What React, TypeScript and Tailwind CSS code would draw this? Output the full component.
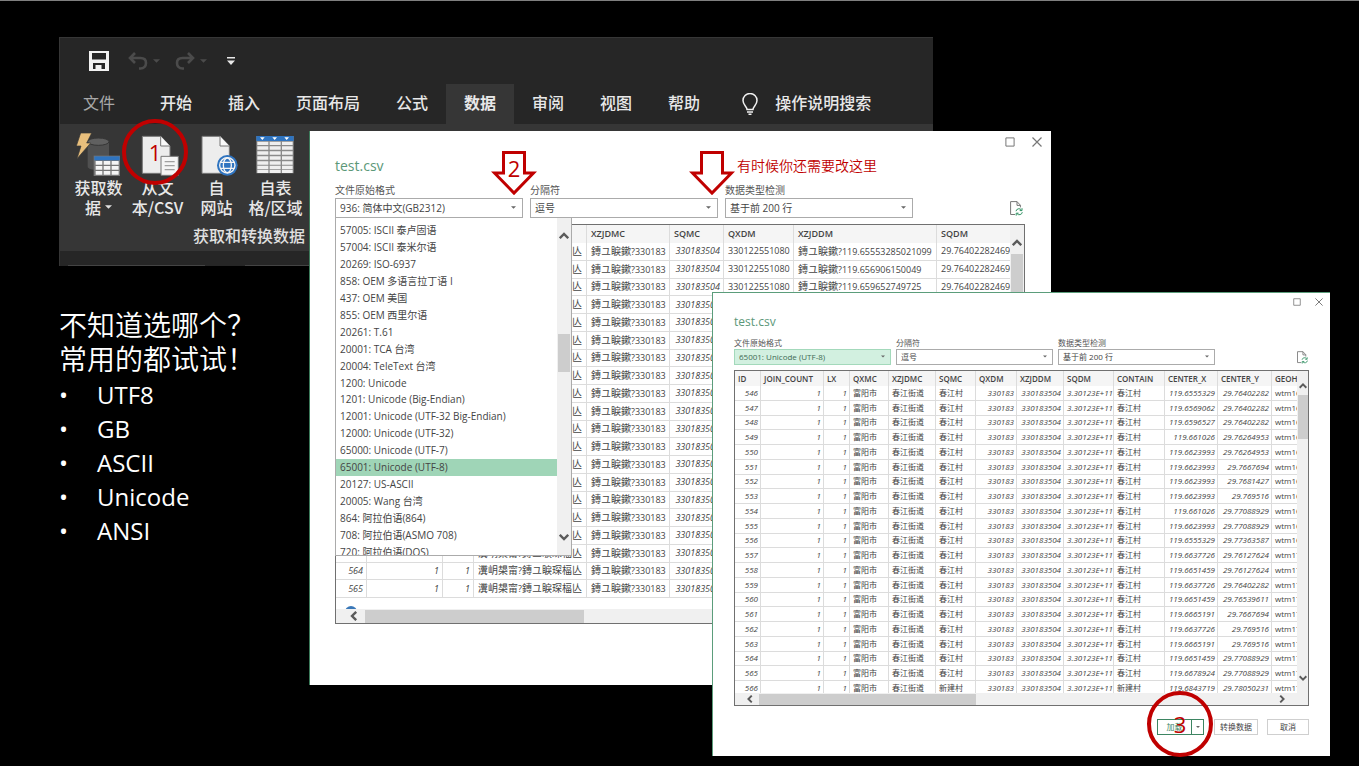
import React from "react";

const latin = "font-['Open_Sans','Noto_Sans_CJK_SC',sans-serif]";

type Column = { name: string; width: string; number?: boolean };
type Size = "large" | "small";

const garbledColumns: Column[] = [
  { name: "ID", width: "w-[31px]", number: true },
  { name: "JOIN_COUNT", width: "w-[76px]", number: true },
  { name: "LX", width: "w-[31px]", number: true },
  { name: "QXMC", width: "w-[113px]" },
  { name: "XZJDMC", width: "w-[83px]" },
  { name: "SQMC", width: "w-[54px]", number: true },
  { name: "QXDM", width: "w-[70px]" },
  { name: "XZJDDM", width: "w-[143px]" },
  { name: "SQDM", width: "w-[89px]" },
];

const garbledX = ["119.65553285021099", "119.656906150049", "119.659652749725"];

const garbledRows: string[][] = Array.from({ length: 20 }, (_, i) => [
  String(546 + i),
  "1",
  "1",
  "瀵岄槼甯?鏄ユ睙琛楅亾",
  "鏄ユ睙鏉?330183",
  "330183504",
  "330122551080",
  "鏄ユ睙鏉?" + (garbledX[i] ?? "119.661026"),
  "29.764022824693",
]);

const cleanColumns: Column[] = [
  { name: "ID", width: "w-[26px]", number: true },
  { name: "JOIN_COUNT", width: "w-[63px]", number: true },
  { name: "LX", width: "w-[26px]", number: true },
  { name: "QXMC", width: "w-[39px]" },
  { name: "XZJDMC", width: "w-[47px]" },
  { name: "SQMC", width: "w-[40px]" },
  { name: "QXDM", width: "w-[41px]", number: true },
  { name: "XZJDDM", width: "w-[47px]", number: true },
  { name: "SQDM", width: "w-[50px]", number: true },
  { name: "CONTAIN", width: "w-[51px]" },
  { name: "CENTER_X", width: "w-[53px]", number: true },
  { name: "CENTER_Y", width: "w-[54px]", number: true },
  { name: "GEOHASH", width: "w-[59px]" },
];

const coordinates: [string, string][] = [
  ["119.6555329", "29.76402282"],
  ["119.6569062", "29.76402282"],
  ["119.6596527", "29.76402282"],
  ["119.661026", "29.76264953"],
  ["119.6623993", "29.76264953"],
  ["119.6623993", "29.7667694"],
  ["119.6623993", "29.7681427"],
  ["119.6623993", "29.769516"],
  ["119.661026", "29.77088929"],
  ["119.6623993", "29.77088929"],
  ["119.6555329", "29.77363587"],
  ["119.6637726", "29.76127624"],
  ["119.6651459", "29.76127624"],
  ["119.6637726", "29.76402282"],
  ["119.6651459", "29.76539611"],
  ["119.6665191", "29.7667694"],
  ["119.6637726", "29.769516"],
  ["119.6665191", "29.769516"],
  ["119.6651459", "29.77088929"],
  ["119.6678924", "29.77088929"],
  ["119.6843719", "29.78050231"],
];

const cleanRows: string[][] = coordinates.map(([x, y], i) => {
  const village = i === 20 ? "新建村" : "春江村";
  return [
    String(546 + i), "1", "1", "富阳市", "春江街道", village, "330183", "330183504",
    "3.30123E+11", village, x, y, i < 11 ? "wtm16" : "wtm17",
  ];
});

const encodings = [
  "57011: ISCII 旁遮普语",
  "57005: ISCII 泰卢固语",
  "57004: ISCII 泰米尔语",
  "20269: ISO-6937",
  "858: OEM 多语言拉丁语 I",
  "437: OEM 美国",
  "855: OEM 西里尔语",
  "20261: T.61",
  "20001: TCA 台湾",
  "20004: TeleText 台湾",
  "1200: Unicode",
  "1201: Unicode (Big-Endian)",
  "12001: Unicode (UTF-32 Big-Endian)",
  "12000: Unicode (UTF-32)",
  "65000: Unicode (UTF-7)",
  "65001: Unicode (UTF-8)",
  "20127: US-ASCII",
  "20005: Wang 台湾",
  "864: 阿拉伯语(864)",
  "708: 阿拉伯语(ASMO 708)",
  "720: 阿拉伯语(DOS)",
];

function Chevron({ className }: { className: string }) {
  return (
    <svg viewBox="0 0 10 10" className={className} fill="none" stroke="#5a5a5a" strokeWidth="2.4" aria-hidden="true">
      <path d="M.8 7.200 5 3l4.200 4.200" />
    </svg>
  );
}

function Caret({ className, fill = "#666" }: { className: string; fill?: string }) {
  return (
    <svg viewBox="0 0 8 4" className={className} fill={fill} aria-hidden="true">
      <path d="M0 0h8L4 4z" />
    </svg>
  );
}

function WindowButtons({ size }: { size: Size }) {
  const icon = size === "large" ? "size-[10px]" : "size-2";
  return (
    <div className={size === "large" ? "flex justify-end gap-[17px] pt-[6px] pr-[9px]" : "flex justify-end gap-[14px] pt-[5px] pr-[7px]"}>
      <button type="button" aria-label="最大化" className="flex">
        <svg viewBox="0 0 10 10" className={icon} fill="none" stroke="#777"><path d="M.9.9h8.2v8.2H.9z" /></svg>
      </button>
      <button type="button" aria-label="关闭" className="flex">
        <svg viewBox="0 0 10 10" className={icon} fill="none" stroke="#777" strokeWidth="1.2"><path d="M.5.5l9 9M9.5.5l-9 9" /></svg>
      </button>
    </div>
  );
}

function Field({ id, label, value, size, highlighted, children }: {
  id: string; label: string; value: string; size: Size; highlighted?: boolean; children?: React.ReactNode;
}) {
  const large = size === "large";
  return (
    <div className={large ? "relative w-[188px]" : "relative w-[157px]"}>
      <label htmlFor={id} className={large ? "block text-[10px] leading-[15px] text-[#555]" : "block text-[8px] leading-3 text-[#555]"}>
        {label}
      </label>
      <div className="relative">
        <select
          id={id}
          defaultValue={value}
          className={
            (large ? "h-5 pl-1 text-[10px] " : "h-4 pl-1 text-[8px] ") +
            (highlighted ? "border-[#a3d9bb] bg-[#d2f0e0] text-[#3f6b55] " : "border-[#ababab] bg-white text-[#444] ") +
            "block w-full appearance-none rounded-none border"
          }
        >
          <option>{value}</option>
        </select>
        <Caret className={large ? "pointer-events-none absolute top-2 right-[7px] h-[3px] w-[5px]" : "pointer-events-none absolute top-[6px] right-[6px] h-[3px] w-1"} />
      </div>
      {children}
    </div>
  );
}

function RefreshIcon({ className }: { className: string }) {
  return (
    <svg viewBox="0 0 13 15" className={className} fill="none" aria-hidden="true">
      <path d="M5 13.500H.6V.6H7l3.400 3.600v2.200M7 .6v3.800h3.400" stroke="#777" />
      <path d="M6 10.200A3 3 0 0 1 11.400 9M12 7.200v2.400H9.700M12.300 11.200A3 3 0 0 1 7 12.600M6.200 14.600v-2.400h2.400" stroke="#2f9162" />
    </svg>
  );
}

/* Han and kana runs are set one pixel larger than the digits beside them. */
function MixedText({ text }: { text: string }) {
  return (
    <>
      {text.split(/([\u3000-\u9fff]+)/).filter(Boolean).map((part, i) =>
        /[\u3000-\u9fff]/.test(part) ? <span key={i} className="text-[10px]">{part}</span> : part,
      )}
    </>
  );
}

function DataTable({ columns, rows, size }: { columns: Column[]; rows: string[][]; size: Size }) {
  const large = size === "large";
  return (
    <table
      className={
        (large ? "h-[373px] w-[690px] text-[9px] leading-[14px] " : "h-[325px] w-[596px] text-[8px] leading-3 ") +
        "table-fixed border-separate border-spacing-0 text-[#444]"
      }
    >
      <colgroup>
        {columns.map((c) => <col key={c.name} className={c.width} />)}
      </colgroup>
      <thead>
        <tr className={large ? "h-[18px]" : "h-[15px]"}>
          {columns.map((c) => (
            <th key={c.name} scope="col" className={(large ? "px-1 " : "pl-[3px] ") + "border-r border-[#dcdcdc] bg-[#f5f5f5] py-0 text-left font-semibold whitespace-nowrap"}>
              {c.name}
            </th>
          ))}
        </tr>
      </thead>
      <tbody>
        {rows.map((row) => (
          <tr key={row[0]}>
            {row.map((cell, i) => (
              <td
                key={i}
                className={
                  (large ? "pr-[3px] pl-1 " : "pr-[2px] pl-[3px] ") +
                  (columns[i].number ? "text-right italic " : "") +
                  "border-r border-b border-[#dcdcdc] py-0 whitespace-nowrap"
                }
              >
                {large ? <MixedText text={cell} /> : cell}
              </td>
            ))}
          </tr>
        ))}
      </tbody>
    </table>
  );
}

function SaveIcon() {
  return (
    <svg viewBox="0 0 20 20" className="size-5" fill="#f2f2f2" aria-hidden="true">
      <path fillRule="evenodd" d="M0 0h20v20H0zM3 2v6.500h14V2zM4 12v6h2.500v-4h6v4H16v-6z" />
      <path d="M8.500 14.500h2.500V18H8.500z" />
    </svg>
  );
}

function UndoIcon({ flipped }: { flipped?: boolean }) {
  return (
    <svg viewBox="0 0 20 18" className={flipped ? "h-[18px] w-5 -scale-x-100" : "h-[18px] w-5"} fill="none" stroke="#4b4b4b" strokeWidth="2.6" aria-hidden="true">
      <path d="M7 1 2 6l5 5M2 6h10.500c3.500 0 5.500 2 5.500 5s-2 5.500-5.500 5.500H11" />
    </svg>
  );
}

function GetDataIcon() {
  return (
    <svg viewBox="81 300 138 138" className="size-[46px]" aria-hidden="true">
      <path d="M116 333v74c0 6 14 10 33 10s31-4 31-10v-74z" fill="#505050" />
      <ellipse cx="148" cy="332" rx="32" ry="11" fill="#606060" stroke="#363636" strokeWidth="3" />
      <path d="M95 306h33l-15 30h12l-41 47 12-38H82z" fill="#e8bf7c" stroke="#363636" strokeWidth="2" />
      <path d="M134 374h79v61h-79z" fill="#777" />
      <path d="M136 376h76v12h-76z" fill="#2f74c0" />
      <path d="M140 390h20v11h-20zM164 390h20v11h-20zM188 390h21v11h-21zM140 405h20v11h-20zM164 405h20v11h-20zM188 405h21v11h-21zM140 420h20v11h-20zM164 420h20v11h-20zM188 420h21v11h-21z" fill="#f5f5f5" />
    </svg>
  );
}

function TextFileIcon() {
  return (
    <svg viewBox="255 300 138 138" className="size-[46px]" aria-hidden="true">
      <path d="M277 316h55l28 29v82h-83z" fill="#ededed" stroke="#777" strokeWidth="3" />
      <path d="M332 316v29h28" fill="#fafafa" stroke="#777" strokeWidth="3" />
      <path d="M333 376h52v57h-52z" fill="#f5f5f5" stroke="#777" strokeWidth="3" />
      <path d="M344 392h30M344 404h30M344 416h30" stroke="#a0a0a0" strokeWidth="4" />
    </svg>
  );
}

function WebIcon() {
  return (
    <svg viewBox="432 300 138 138" className="size-[46px]" aria-hidden="true">
      <path d="M456 316h54l28 29v82h-82z" fill="#ededed" stroke="#777" strokeWidth="3" />
      <path d="M510 316v29h28" fill="#fafafa" stroke="#777" strokeWidth="3" />
      <circle cx="532" cy="403" r="31" fill="#2f74c0" />
      <g fill="none" stroke="#f5f5f5" strokeWidth="4">
        <ellipse cx="532" cy="403" rx="12" ry="22" />
        <circle cx="532" cy="403" r="23" />
        <path d="M511 394h42M511 412h42" />
      </g>
    </svg>
  );
}

function RangeIcon() {
  return (
    <svg viewBox="609 300 138 138" className="size-[46px]" aria-hidden="true">
      <path d="M619 315h112v112H619z" fill="#8a8a8a" />
      <path d="M619 315h112v15H619z" fill="#2f74c0" />
      <path d="M630 319h14l-7 8zM667 319h14l-7 8zM703 319h14l-7 8z" fill="#fff" />
      {[332, 346, 361, 376, 391, 404, 416].map((y) => (
        <path key={y} d={`M622 ${y}h33v10h-33zM659 ${y}h33v10h-33zM696 ${y}h32v10h-32z`} fill="#efefef" />
      ))}
    </svg>
  );
}

function RibbonButton({ icon, lines, menu }: { icon: React.ReactNode; lines: [string, string]; menu?: boolean }) {
  return (
    <button type="button" className="flex w-[59px] shrink-0 flex-col items-center text-base leading-5 font-medium whitespace-nowrap text-[#e8e8e8]">
      {icon}
      <span>{lines[0]}</span>
      <span className="flex items-center gap-1">
        {lines[1]}
        {menu && <Caret className="h-1 w-[7px]" fill="#e0e0e0" />}
      </span>
    </button>
  );
}

const tabs = ["开始", "插入", "页面布局", "公式", "数据", "审阅", "视图", "帮助"];

function ExcelRibbon() {
  return (
    <section aria-label="Excel" className="absolute top-[37px] left-[59px] flex h-[229px] w-[874px] flex-col border-t border-l border-[#363636] bg-[#262626] font-['Noto_Sans_CJK_SC',sans-serif]">
      <div className="flex h-[46px] items-center pl-[29px]">
        <button type="button" aria-label="保存"><SaveIcon /></button>
        <button type="button" aria-label="撤消" className="ml-[19px] flex items-center gap-[5px]">
          <UndoIcon /><Caret className="h-1 w-[7px]" fill="#4b4b4b" />
        </button>
        <button type="button" aria-label="恢复" className="ml-[15px] flex items-center gap-[5px]">
          <UndoIcon flipped /><Caret className="h-1 w-[7px]" fill="#4b4b4b" />
        </button>
        <button type="button" aria-label="自定义快速访问工具栏" className="ml-5">
          <svg viewBox="0 0 8 8" className="size-2" fill="#e8e8e8"><path d="M0 0h8v1.500H0zM0 3.500h8L4 8z" /></svg>
        </button>
      </div>
      <nav className="flex h-10 items-stretch text-base font-medium text-[#e8e8e8]">
        <button type="button" className="w-[82px] pr-1 pb-1 font-normal text-[#a8a8a8]">文件</button>
        {tabs.map((tab) => (
          <button
            key={tab}
            type="button"
            className={tab === "数据" ? "bg-[#363636] px-[18px] pb-1 font-bold" : "px-[18px] pb-1"}
          >
            {tab}
          </button>
        ))}
        <button type="button" className="ml-6 flex items-center gap-[17px] pb-1">
          <svg viewBox="0 0 16 22" className="mt-1 h-[22px] w-4" fill="none" stroke="#f0f0f0" strokeWidth="1.500" aria-hidden="true">
            <path d="M5 16.500c0-3-4-4.500-4-9a7 7 0 0 1 14 0c0 4.500-4 6-4 9zM5 19h6M6.500 21.300h3" />
          </svg>
          操作说明搜索
        </button>
      </nav>
      <div className="flex h-[127px] flex-col bg-[#363636] pt-[7px]">
        <div className="flex pl-[9px]">
          <RibbonButton icon={<GetDataIcon />} lines={["获取数", "据"]} menu />
          <RibbonButton icon={<TextFileIcon />} lines={["从文", "本/CSV"]} />
          <RibbonButton icon={<WebIcon />} lines={["自", "网站"]} />
          <RibbonButton icon={<RangeIcon />} lines={["自表", "格/区域"]} />
        </div>
        <p className="pt-[6px] pl-[133px] text-base leading-6 font-medium text-[#e0e0e0]">获取和转换数据</p>
      </div>
      <div className="flex flex-1 items-end gap-10 pl-2">
        <span className="h-px w-[137px] bg-[#444]" />
        <span className="h-px w-[80px] bg-[#444]" />
      </div>
    </section>
  );
}

function GarbledWindow() {
  return (
    <section aria-label="test.csv 936" className={`absolute top-[131px] left-[309px] h-[554px] w-[742px] border-l border-[#3c7a5a] bg-white ${latin}`}>
      <WindowButtons size="large" />
      <div className="pr-[26px] pl-[25px]">
        <h2 className="pt-2 text-sm leading-[22px] text-[#5b9879]">test.csv</h2>
        <div className="flex items-end gap-[7px] pt-[6px]">
          <Field id="origin-a" label="文件原始格式" value="936: 简体中文(GB2312)" size="large">
            <div className="absolute top-full left-0 z-10 flex h-[338px] w-[237px] overflow-hidden border-x border-b border-[#ababab] bg-white">
              <ul role="listbox" aria-label="文件原始格式" className="-mt-[13px] flex h-[355px] flex-1 shrink-0 flex-col text-[10px] text-[#444]">
                {encodings.map((item) => {
                  const selected = item.startsWith("65001");
                  return (
                    <li key={item} role="option" aria-selected={selected} className={selected ? "flex flex-1 items-center bg-[#9fd5b7] pl-1 leading-4" : "flex flex-1 items-center pl-1 leading-4"}>
                      {item}
                    </li>
                  );
                })}
              </ul>
              <div className="flex w-[14px] flex-col items-center bg-[#f0f0f0] pt-[13px] pb-[13px]">
                <Chevron className="size-[10px]" />
                <span className="mt-[93px] h-[38px] w-3 bg-[#cdcdcd]" />
                <Chevron className="mt-auto size-[10px] rotate-180" />
              </div>
            </div>
          </Field>
          <Field id="separator-a" label="分隔符" value="逗号" size="large" />
          <Field id="detect-a" label="数据类型检测" value="基于前 200 行" size="large" />
          <button type="button" aria-label="刷新" className="mr-[2px] mb-[2px] ml-auto"><RefreshIcon className="h-[15px] w-[13px]" /></button>
        </div>
        <div className="mt-[6px] flex h-[400px] flex-col border border-[#707070]">
          <div className="flex min-h-0 flex-1">
            <div className="min-w-0 flex-1 overflow-hidden">
              <DataTable columns={garbledColumns} rows={garbledRows} size="large" />
              <svg viewBox="0 0 12 12" className="mt-2 ml-[9px] size-3" aria-hidden="true"><circle cx="6" cy="6" r="6" fill="#3a78b8" /></svg>
            </div>
            <div className="flex w-[14px] flex-col items-center bg-[#f0f0f0] pt-[13px]">
              <Chevron className="size-[10px]" />
              <span className="mt-[6px] h-20 w-3 bg-[#cdcdcd]" />
            </div>
          </div>
          <div className="flex h-[14px] items-center bg-[#f0f0f0] pl-[13px]">
            <Chevron className="size-[10px] -rotate-90" />
            <span className="ml-[6px] h-[13px] w-[219px] bg-[#cdcdcd]" />
          </div>
        </div>
      </div>
    </section>
  );
}

function CleanWindow() {
  return (
    <section aria-label="test.csv 65001" className={`absolute top-[292px] left-[712px] h-[464px] w-[618px] border-t border-l border-[#5b9d7b] bg-white ${latin}`}>
      <WindowButtons size="small" />
      <div className="px-[21px]">
        <h2 className="pt-[6px] text-xs leading-5 text-[#5b9879]">test.csv</h2>
        <div className="flex items-end gap-[5px] pt-[5px]">
          <Field id="origin-b" label="文件原始格式" value="65001: Unicode (UTF-8)" size="small" highlighted />
          <Field id="separator-b" label="分隔符" value="逗号" size="small" />
          <Field id="detect-b" label="数据类型检测" value="基于前 200 行" size="small" />
          <button type="button" aria-label="刷新" className="mr-px mb-px ml-auto"><RefreshIcon className="h-[13px] w-[11px]" /></button>
        </div>
        <div className="mt-[5px] flex h-[336px] flex-col border border-[#707070]">
          <div className="flex min-h-0 flex-1">
            <div className="min-w-0 flex-1 overflow-hidden">
              <DataTable columns={cleanColumns} rows={cleanRows} size="small" />
            </div>
            <div className="relative flex w-[11px] flex-col items-center bg-[#f0f0f0] pt-[11px] pb-[11px]">
              <Chevron className="size-2" />
              <span className="mt-[5px] h-11 w-[10px] bg-[#cdcdcd]" />
              <Chevron className="mt-auto size-2 rotate-180" />
            </div>
          </div>
          <div className="flex h-3 items-center bg-[#f0f0f0] pr-[22px] pl-[11px]">
            <Chevron className="size-2 -rotate-90" />
            <span className="ml-[5px] h-[11px] w-[217px] bg-[#cdcdcd]" />
            <Chevron className="ml-auto size-2 rotate-90" />
          </div>
        </div>
        <div className="flex justify-end pt-[13px] text-[8px] leading-3 text-[#444]">
          <button type="button" className="h-4 w-[35px] border border-[#3d8562] text-[#3d8562]">加载</button>
          <button type="button" aria-label="加载选项" className="mr-[10px] flex h-4 w-3 items-center justify-center border border-l-0 border-[#3d8562]">
            <Caret className="h-[2px] w-1" />
          </button>
          <button type="button" className="mr-[9px] h-4 w-11 border border-[#cfcfcf]">转换数据</button>
          <button type="button" className="h-4 w-[42px] border border-[#cfcfcf]">取消</button>
        </div>
      </div>
    </section>
  );
}

function DownArrow({ className, children }: { className: string; children?: React.ReactNode }) {
  return (
    <div className={`absolute h-[46px] w-[46px] text-center ${className}`}>
      <svg viewBox="0 0 46 46" className="absolute inset-0 size-full" fill="#fff" stroke="#c00000" strokeWidth="3" aria-hidden="true">
        <path d="M12.500 2.500h21v20.500h9L23 43 3.500 23h9z" />
      </svg>
      <span className="relative text-[22px] leading-9 text-[#c00000]">{children}</span>
    </div>
  );
}

function StepCircle({ className, children }: { className: string; children: React.ReactNode }) {
  return (
    <div className={`absolute flex size-[66px] items-center justify-center rounded-full border-4 border-[#c00000] text-[22px] leading-7 text-[#c00000] ${className}`}>
      {children}
    </div>
  );
}

export default function App() {
  return (
    <main className={`relative min-h-screen w-full overflow-hidden border-t border-[#7f7f7f] bg-black ${latin}`}>
      <div className="pt-[306px] pl-[59px] text-white">
        <h1 className="mb-[3px] font-['Noto_Sans_CJK_SC',sans-serif] text-[28px] leading-[34px] font-[350]">
          不知道选哪个？<br />常用的都试试！
        </h1>
        <ul className="text-2xl leading-[34px]">
          {["UTF8", "GB", "ASCII", "Unicode", "ANSI"].map((name) => (
            <li key={name} className="flex">
              <span className="w-[38px]">•</span>
              {name}
            </li>
          ))}
        </ul>
      </div>
      <div className="absolute -top-px left-0">
        <ExcelRibbon />
        <GarbledWindow />
        <CleanWindow />
        <StepCircle className="top-[119px] left-[122px]">1</StepCircle>
        <DownArrow className="top-[150px] left-[491px]">2</DownArrow>
        <DownArrow className="top-[150px] left-[689px]" />
        <p className="absolute top-[155px] left-[737px] font-['Noto_Sans_CJK_SC',sans-serif] text-sm leading-5 font-[350] whitespace-nowrap text-[#c00000]">
          有时候你还需要改这里
        </p>
        <StepCircle className="top-[691px] left-[1147px]">3</StepCircle>
      </div>
    </main>
  );
}
